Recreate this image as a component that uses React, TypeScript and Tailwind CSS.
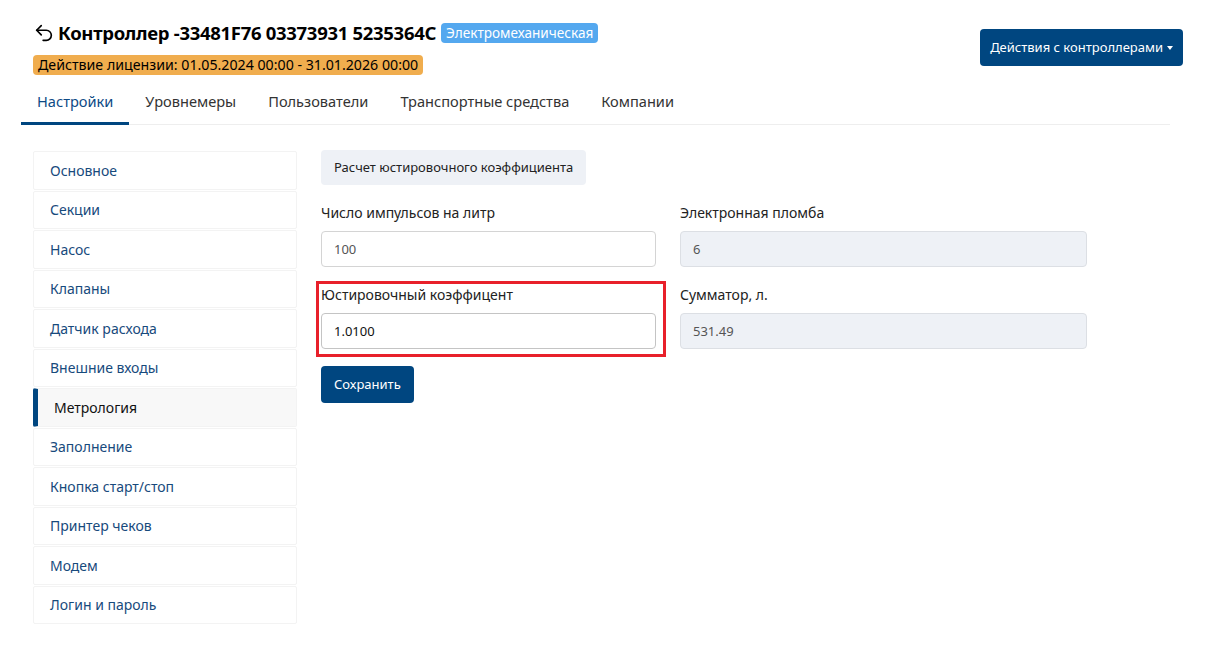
import { Undo2 } from 'lucide-react'

const menu = [
  'Основное',
  'Секции',
  'Насос',
  'Клапаны',
  'Датчик расхода',
  'Внешние входы',
  'Метрология',
  'Заполнение',
  'Кнопка старт/стоп',
  'Принтер чеков',
  'Модем',
  'Логин и пароль',
]

const tabs = ['Настройки', 'Уровнемеры', 'Пользователи', 'Транспортные средства', 'Компании']

const font = { fontFamily: '"Noto Sans", "Open Sans", sans-serif' }

export default function App() {
  return (
    <div className="min-h-[648px] w-[1217px] bg-white text-[#212529]" style={font}>
      {/* header */}
      <div className="flex items-start justify-between pl-[33px] pr-[34px] pt-[20px]">
        <div>
          <div className="flex items-center">
            <Undo2 className="h-[22px] w-[22px] text-black" strokeWidth={1.8} />
            <h1 className="ml-[3px] text-[18.5px] font-bold leading-[26px] tracking-[-0.3px] text-black">
              Контроллер -33481F76 03373931 5235364C
            </h1>
            <span className="ml-[5px] rounded-[4px] bg-[#54a8ef] px-[5px] text-[13.6px] leading-[20px] text-white">
              Электромеханическая
            </span>
          </div>
          <div className="mt-[9px] inline-block rounded-[4px] bg-[#f0ad4e] px-[5px] text-[14.2px] leading-[20px] text-black">
            Действие лицензии: 01.05.2024 00:00 - 31.01.2026 00:00
          </div>
        </div>
        <button className="mt-[9px] flex h-[37px] items-center rounded-[4px] bg-[#004680] px-[10px] text-[13px] text-white">
          Действия с контроллерами
          <span className="ml-[4px] mt-[1px] border-x-[3.5px] border-t-[4px] border-x-transparent border-t-white" />
        </button>
      </div>

      {/* tabs */}
      <div className="ml-[21px] mr-[47px] mt-[12px] flex border-b border-[#eeeeee]">
        {tabs.map((t, i) => (
          <div
            key={t}
            className={`px-[16px] pb-[9px] pt-[3px] text-[14.6px] leading-[21px] ${
              i === 0 ? 'mb-[-1px] border-b-[3px] border-[#004680] text-[#0d4a85]' : 'border-b-[3px] border-transparent text-[#333333]'
            }`}
          >
            {t}
          </div>
        ))}
      </div>

      {/* body */}
      <div className="mt-[26px] flex pl-[33px]">
        <div className="flex w-[264px] flex-col gap-[1px]">
          {menu.map((m) => {
            const active = m === 'Метрология'
            return (
              <div
                key={m}
                className={`flex h-[38.5px] items-center rounded-[2px] border border-[#f3f3f3] text-[14px] ${
                  active ? 'border-l-[5px] border-l-[#004680] bg-[#f8f8f8] pl-[16px] text-[#111]' : 'pl-[16px] text-[#174a7c]'
                }`}
              >
                {m}
              </div>
            )
          })}
        </div>

        <div className="-mt-[1px] ml-[24px] w-[766px]">
          <div className="inline-flex h-[35px] items-center rounded-[4px] bg-[#eef1f6] px-[13px] text-[13px] text-[#222]">
            Расчет юстировочного коэффициента
          </div>

          <div className="mt-[18px] grid grid-cols-[335px_407px] gap-x-[24px]">
            <div>
              <div className="text-[14px] leading-[20px] text-[#222]">Число импульсов на литр</div>
              <input
                readOnly
                value="100"
                className="mt-[8px] h-[36px] w-full rounded-[4px] border border-[#d4d4d4] bg-white px-[12px] text-[13px] text-[#555] outline-none"
              />
            </div>
            <div>
              <div className="text-[14px] leading-[20px] text-[#222]">Электронная пломба</div>
              <input
                readOnly
                value="6"
                className="mt-[8px] h-[36px] w-full rounded-[4px] border border-[#dcdfe4] bg-[#eef1f6] px-[12px] text-[13px] text-[#555] outline-none"
              />
            </div>

            <div className="relative mt-[18px]">
              <div className="pointer-events-none absolute -left-[5px] -right-[10px] -top-[4px] bottom-[-8px] border-[3px] border-[#e8202a]" />
              <div className="text-[14px] leading-[20px] text-[#222]">Юстировочный коэффицент</div>
              <input
                readOnly
                value="1.0100"
                className="mt-[8px] h-[36px] w-full rounded-[4px] border border-[#c4c4c4] bg-white px-[12px] text-[13px] text-[#111] outline-none"
              />
            </div>
            <div className="mt-[18px]">
              <div className="text-[14px] leading-[20px] text-[#222]">Сумматор, л.</div>
              <input
                readOnly
                value="531.49"
                className="mt-[8px] h-[36px] w-full rounded-[4px] border border-[#dcdfe4] bg-[#eef1f6] px-[12px] text-[13px] text-[#555] outline-none"
              />
            </div>
          </div>

          <button className="mt-[17px] h-[37px] rounded-[4px] bg-[#004680] px-[13px] text-[13px] text-white">
            Сохранить
          </button>
        </div>
      </div>
    </div>
  )
}
